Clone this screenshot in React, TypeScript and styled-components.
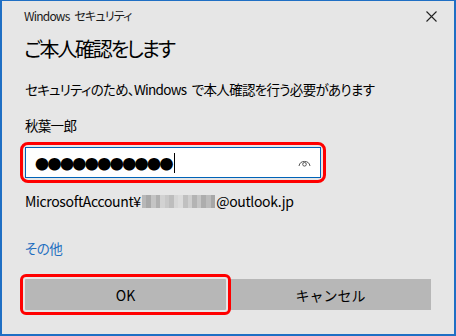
import styled, { createGlobalStyle } from 'styled-components';

const GlobalStyle = createGlobalStyle`
  html, body {
    margin: 0;
    padding: 0;
    background: #e6e6e6;
  }
  body {
    font-family: "Noto Sans CJK JP", "Noto Sans", sans-serif;
    font-feature-settings: "palt";
    color: #000;
  }
`;

const Window = styled.div`
  box-sizing: border-box;
  width: 456px;
  height: 336px;
  border: 2px solid #1f6fc4;
  border-top-width: 1px;
  background: #e6e6e6;
  display: flex;
  flex-direction: column;
`;

const TitleBar = styled.div`
  height: 30px;
  display: flex;
  align-items: center;
  justify-content: space-between;
  padding: 0 17px 0 22px;
`;

const TitleText = styled.span`
  font-size: 12px;
  letter-spacing: -0.8px;
  word-spacing: 3px;
  line-height: 30px;
  color: #1a1a1a;
`;

const CloseButton = styled.button`
  width: 12px;
  height: 12px;
  padding: 0;
  border: none;
  background: none;
  display: flex;
  align-items: center;
  justify-content: center;
`;

const Body = styled.div`
  display: flex;
  flex-direction: column;
  align-items: flex-start;
  padding: 0 22px;
`;

const Heading = styled.h1`
  margin: 4px 0 0;
  font-size: 20px;
  letter-spacing: -2.2px;
  font-weight: 400;
  line-height: 28px;
`;

const Line = styled.p<{ $gap: number }>`
  margin: ${(p) => p.$gap}px 0 0 1px;
  font-size: 13.5px;
  letter-spacing: -0.7px;
  word-spacing: 3px;
  line-height: 20px;
`;

const Highlight = styled.div<{ $gap: number }>`
  margin-top: ${(p) => p.$gap}px;
  margin-left: 1px;
  border-radius: 3px;
  outline: 3px solid #ff0000;
  outline-offset: 2px;
`;

const InputBox = styled.div`
  box-sizing: border-box;
  width: 296px;
  height: 31px;
  background: #fff;
  border: 1px solid #0063b8;
  display: flex;
  align-items: center;
  padding: 0 9px;
`;

const Dots = styled.span`
  font-size: 14px;
  letter-spacing: -1.55px;
  line-height: 20px;
  font-feature-settings: normal;
`;

const Caret = styled.span`
  width: 1px;
  height: 20px;
  background: #000;
  margin-left: 2px;
`;

const RevealIcon = styled.svg`
  margin-left: auto;
`;

const Account = styled.p`
  margin: 13px 0 0 1px;
  font-size: 14px;
  letter-spacing: -0.35px;
  line-height: 20px;
  display: flex;
  align-items: center;
`;

const Mosaic = styled.span`
  display: inline-flex;
  height: 13px;
  margin: 0 1px;
`;

const Cell = styled.span<{ $shade: string }>`
  width: 4.6px;
  height: 13px;
  background: ${(p) => p.$shade};
`;

const Link = styled.a`
  margin: 27px 0 0 1px;
  font-size: 13.5px;
  letter-spacing: -0.5px;
  line-height: 20px;
  color: #1f6fc0;
  text-decoration: none;
`;

const ButtonRow = styled.div`
  margin: 21px 0 0 1px;
  display: grid;
  grid-template-columns: 201px 201px;
  column-gap: 4px;
`;

const Button = styled.button<{ $marked?: boolean }>`
  height: 31px;
  border: none;
  border-radius: 0;
  background: #b7b7b7;
  font-family: inherit;
  font-size: 14px;
  font-weight: 400;
  color: #000;
  position: relative;
  z-index: ${(p) => (p.$marked ? 1 : 0)};
  ${(p) => (p.$marked ? 'outline: 3px solid #ff0000; outline-offset: 2px; border-radius: 1px;' : '')}
`;

const shades = [
  '#b8b8b8', '#a9a9a9', '#c4c4c4', '#b0b0b0', '#d2d2d2', '#c8c8c8',
  '#bdbdbd', '#d6d6d6', '#dcdcdc', '#c0c0c0', '#cfcfcf', '#b4b4b4',
  '#c6c6c6', '#adadad', '#bcbcbc', '#a7a7a7',
];

export default function App() {
  return (
    <>
      <GlobalStyle />
      <Window>
        <TitleBar>
          <TitleText>Windows セキュリティ</TitleText>
          <CloseButton aria-label="閉じる">
            <svg width="11" height="11" viewBox="0 0 11 11">
              <path d="M0.5 0.5 L10.5 10.5 M10.5 0.5 L0.5 10.5" stroke="#222" strokeWidth="1.1" />
            </svg>
          </CloseButton>
        </TitleBar>
        <Body>
          <Heading>ご本人確認をします</Heading>
          <Line $gap={16}>セキュリティのため、Windows で本人確認を行う必要があります</Line>
          <Line $gap={16}>秋葉一郎</Line>
          <Highlight $gap={12}>
            <InputBox>
              <Dots>●●●●●●●●●●●</Dots>
              <Caret />
              <RevealIcon width="13" height="9" viewBox="0 0 13 9">
                <path d="M1 8 A5.6 5.6 0 0 1 12 8" fill="none" stroke="#555" strokeWidth="1" />
                <circle cx="6.5" cy="6.3" r="1.8" fill="none" stroke="#555" strokeWidth="1" />
              </RevealIcon>
            </InputBox>
          </Highlight>
          <Account>
            MicrosoftAccount¥
            <Mosaic>
              {shades.map((s, i) => (
                <Cell key={i} $shade={s} />
              ))}
            </Mosaic>
            @outlook.jp
          </Account>
          <Link href="#">その他</Link>
          <ButtonRow>
            <Button $marked>OK</Button>
            <Button>キャンセル</Button>
          </ButtonRow>
        </Body>
      </Window>
    </>
  );
}
